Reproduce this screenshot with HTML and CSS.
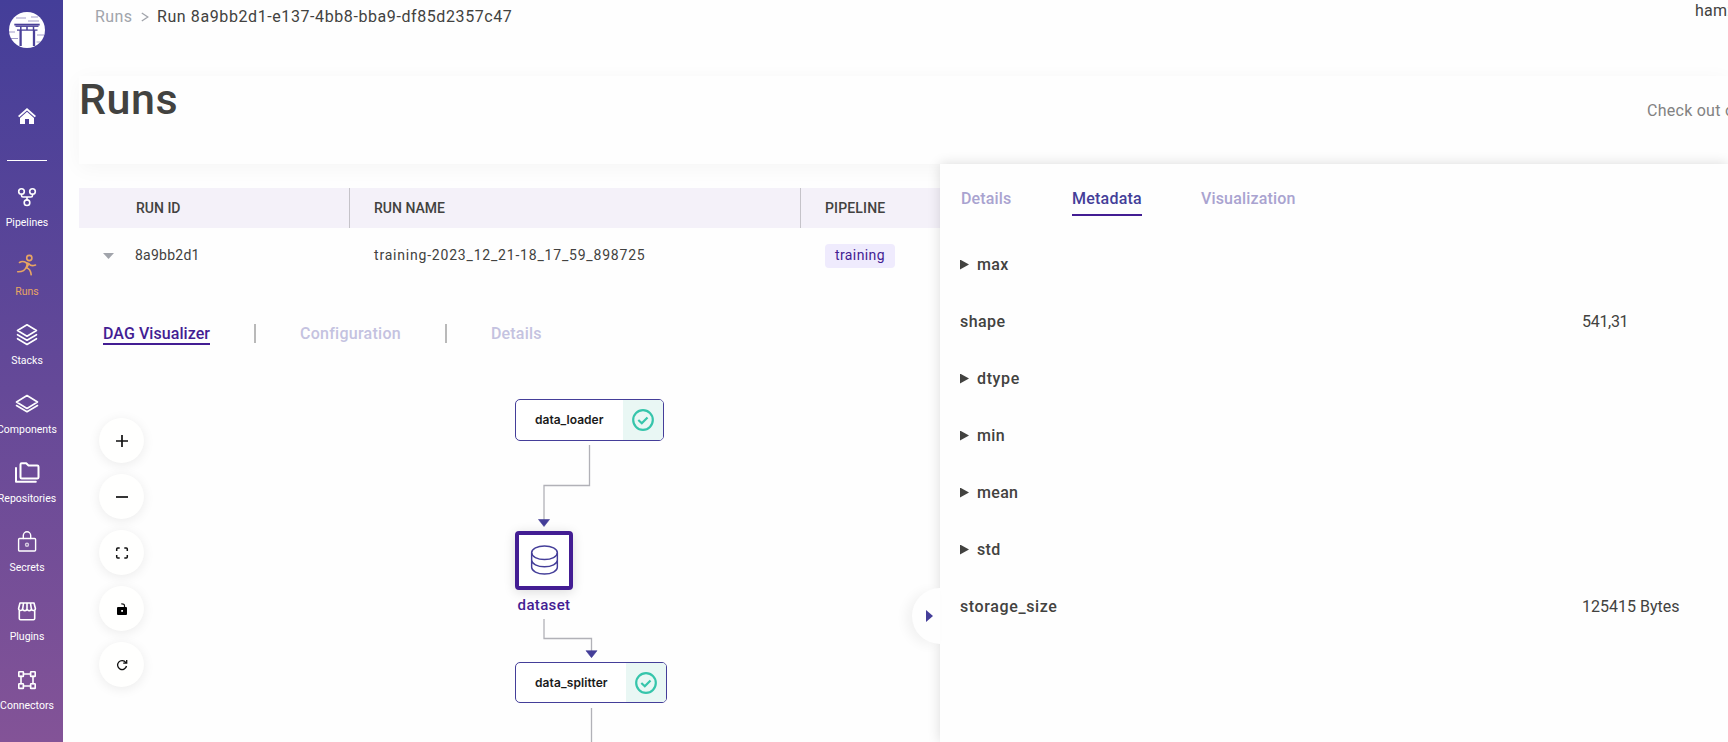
FILE: index.html
```html
<!DOCTYPE html>
<html lang="en">
<head>
<meta charset="utf-8">
<title>Runs</title>
<link rel="stylesheet" href="styles.css">
</head>
<body>
<div class="app">
  <nav class="sidebar">
    <svg class="logo" viewBox="0 0 36 36">
      <circle cx="18" cy="18" r="18" fill="#fff"/>
      <g stroke="#4a4099" fill="none">
        <path d="M5.300 12.600h25.400" stroke-width="1.800"/>
        <path d="M6.500 14.200h23" stroke-width="1.400"/>
        <path d="M8 18.100h20.500" stroke-width="1.300"/>
        <path d="M11.800 14.500v3.500M18 14.500v3.500M24.500 14.500v3.500" stroke-width="1.500"/>
        <path d="M11.600 18v16M25 18v16" stroke-width="2.300"/>
        <path d="M7 6h10M22 5h7M19 9h11M0 20h6M2 26.500h7M28 23h7M27.500 30h4" stroke-width=".8" opacity=".65"/>
      </g>
    </svg>
    <svg class="home" viewBox="0 0 18 16" fill="#fff"><path d="M9 0 0 8l1.300 1.300L9 2.500l7.700 6.800L18 8z"/><path d="M9 3.800 2 10v6h5v-5h4v5h5v-6z"/></svg>
    <div class="rule"></div>
    <a class="nav-item">
      <svg viewBox="0 0 26 26"><circle cx="7.500" cy="7.500" r="2.800"/><circle cx="18.500" cy="7.500" r="2.800"/><circle cx="13" cy="18.700" r="2.800"/><path d="M7.500 10.300v1.200q0 1.500 1.500 1.500h8q1.500 0 1.500-1.500v-1.200M13 13v3"/></svg>
      <span>Pipelines</span></a>
    <a class="nav-item active">
      <svg viewBox="0 0 26 26"><circle cx="15.300" cy="5" r="2.600"/><path d="M5.500 9.500q3-2 6.500 0l3 1.300q2 3 6.500 1.200M12 9.700q2 1.500.5 4-2 5.300-8.800 5M14.800 10.800l-2.300 4q4 1 4.700 7"/></svg>
      <span>Runs</span></a>
    <a class="nav-item">
      <svg viewBox="0 0 26 26"><path d="M13 2.800 3.500 8.500 13 14.200l9.500-5.700zM3.500 12.700 13 18.300l9.500-5.600M3.500 16.700 13 22.500l9.500-5.800"/></svg>
      <span>Stacks</span></a>
    <a class="nav-item">
      <svg viewBox="0 0 26 26"><path d="M13 4.500 2.500 11 13 17.500 23.500 11zM2.500 14.500 13 20.800l10.500-6.300"/></svg>
      <span>Components</span></a>
    <a class="nav-item bold">
      <svg viewBox="0 0 26 26"><path d="M6.500 4.500q0-1.200 1.200-1.200h4.500l2.300 2.200h8.800q1.200 0 1.200 1.200v10.500q0 1.200-1.200 1.200H7.700q-1.200 0-1.200-1.200zM2 8v13.700h19.800"/></svg>
      <span>Repositories</span></a>
    <a class="nav-item thin">
      <svg viewBox="0 0 26 26"><rect x="4.600" y="9.500" width="17" height="12.500" rx="1"/><path d="M9.300 9.500V6.500a3.700 3.700 0 0 1 7.400 0v3"/><circle cx="13" cy="15.800" r="1.500" opacity=".7"/></svg>
      <span>Secrets</span></a>
    <a class="nav-item">
      <svg viewBox="0 0 26 26"><path d="M5.300 12v8.500q0 1.200 1.200 1.200h13q1.200 0 1.200-1.200V12M6 5h14l1.400 5.500a2 2 0 0 1-4 0 2.200 2.200 0 0 1-4.400 0 2.200 2.200 0 0 1-4.400 0 2 2 0 0 1-4 0zM9.500 5l-.7 5M13 5v5M16.500 5l.7 5"/></svg>
      <span>Plugins</span></a>
    <a class="nav-item">
      <svg viewBox="0 0 26 26"><rect x="4.800" y="4.800" width="4.600" height="4.600" rx=".5"/><rect x="16.600" y="4.800" width="4.600" height="4.600" rx=".5"/><rect x="4.800" y="16.800" width="4.600" height="4.600" rx=".5"/><rect x="16.600" y="16.800" width="4.600" height="4.600" rx=".5"/><path d="M9.400 7h7.200M9.400 19h7.200M7 9.400v7.400M19 9.400v7.400"/></svg>
      <span>Connectors</span></a>
  </nav>

  <main class="main">
    <header class="topbar">
      <div class="crumbs"><span class="crumb-root">Runs</span><svg class="crumb-sep" viewBox="0 0 8 10"><path d="m.8 1 6 4-6 4"/></svg><span class="crumb-run">Run 8a9bb2d1-e137-4bb8-bba9-df85d2357c47</span></div>
      <span class="user">hamz</span>
    </header>
    <section class="page-head">
      <h1>Runs</h1>
      <span class="hint">Check out o</span>
    </section>
    <section class="runs">
      <div class="row head"><div>RUN ID</div><div>RUN NAME</div><div class="th-pipe">PIPELINE</div></div>
      <div class="row"><div class="id-cell"><i class="caret"></i><span class="run-id">8a9bb2d1</span></div><div class="run-name">training-2023_12_21-18_17_59_898725</div><div><span class="badge">training</span></div></div>
      <div class="tabs"><span class="tab on">DAG Visualizer</span><i></i><span class="tab t-conf">Configuration</span><i></i><span class="tab t-det">Details</span></div>
      <div class="dag">
        <div class="controls">
          <button><svg viewBox="0 0 14 14"><path d="M1 7h12M7 1v12" stroke-width="1.700"/></svg></button>
          <button><svg viewBox="0 0 14 14"><path d="M1 7h12" stroke-width="1.700"/></svg></button>
          <button><svg viewBox="0 0 14 14"><path d="M1.700 5V3q0-1 1-1h2M9.300 2h2q1 0 1 1v2M12.300 9v2q0 1-1 1h-2M4.700 12h-2q-1 0-1-1V9" stroke-width="1.500"/></svg></button>
          <button><svg viewBox="0 0 14 14"><rect x="2" y="5" width="10" height="8" rx="1" fill="#000" stroke="none"/><rect x="6.200" y="8" width="1.800" height="1.800" fill="#fff" stroke="none"/><path d="M9.500 5V3.800Q9.500 1.600 6.300 1.800" stroke-width="1.200"/></svg></button>
          <button><svg viewBox="0 0 14 14"><path d="M10.800 4.500A4.500 4.500 0 1 0 11.500 8M11.700 2v3.200H8.200" stroke-width="1.300"/></svg></button>
        </div>
        <svg class="edges" viewBox="0 0 861 378" width="861" height="378">
          <path d="M510.500 81v40.500H465V156M465 255v19.500h47.500V287M512.500 344v34" fill="none" stroke="#b1b1b7" stroke-width="1.300"/>
          <path d="M459.500 155.500h11l-5.500 7zM507 286.700h11l-5.500 7z" fill="#443e99" stroke="#443e99" stroke-width=".6"/>
        </svg>
        <div class="step loader"><span>data_loader</span><div class="ok"><svg viewBox="0 0 24 24"><circle cx="12" cy="12" r="9.800"/><path d="m7.300 12 3.500 3.300 5.700-5.800"/></svg></div></div>
        <div class="artifact"><svg viewBox="0 0 30 32"><ellipse cx="15" cy="8" rx="13.300" ry="7"/><path d="M1.700 8v15c0 3.800 6 7 13.300 7s13.300-3.200 13.300-7V8M1.700 15.500c0 3.800 6 7 13.300 7s13.300-3.200 13.300-7"/></svg></div>
        <div class="artifact-label">dataset</div>
        <div class="step splitter"><span>data_splitter</span><div class="ok"><svg viewBox="0 0 24 24"><circle cx="12" cy="12" r="9.800"/><path d="m7.300 12 3.500 3.300 5.700-5.800"/></svg></div></div>
      </div>
    </section>
  </main>

  <aside class="panel">
    <div class="toggle"><svg viewBox="0 0 7 12"><path d="M0 0v12l7-6z" fill="#443e99"/></svg></div>
    <div class="ptabs"><span class="pt1">Details</span><span class="pt2 cur">Metadata</span><span>Visualization</span></div>
    <div class="meta"><i class="tri"></i><b>max</b></div>
    <div class="meta"><b class="shape">shape</b><span class="v dims">541,31</span></div>
    <div class="meta"><i class="tri"></i><b class="wide">dtype</b></div>
    <div class="meta"><i class="tri"></i><b>min</b></div>
    <div class="meta"><i class="tri"></i><b>mean</b></div>
    <div class="meta"><i class="tri"></i><b>std</b></div>
    <div class="meta"><b class="wide">storage_size</b><span class="v">125415 Bytes</span></div>
  </aside>
</div>
</body>
</html>
```
FILE: styles.css
```css
* { box-sizing: border-box; }
body { margin: 0; background: #fefefe; font-family: Roboto, "Liberation Sans", sans-serif; color: #424240; overflow: hidden; }
.app { position: relative; display: flex; width: 1728px; height: 742px; overflow: hidden; white-space: nowrap; }

.sidebar { width: 63px; flex: none; height: 742px; padding: 12px 9px 0 0; background: linear-gradient(#443e99, #835397); display: flex; flex-direction: column; align-items: center; }
.logo { width: 36px; height: 36px; flex: none; }
.home { width: 18px; height: 16px; flex: none; margin-top: 60px; }
.rule { width: 40px; height: 1px; flex: none; background: #fff; margin: 36px 0 23px; }
.nav-item { height: 69px; flex: none; display: flex; flex-direction: column; align-items: center; gap: 5px; color: #fff; font-size: 10.5px; line-height: 16px; }
.nav-item svg { width: 26px; height: 26px; fill: none; stroke: currentColor; stroke-width: 1.6; stroke-linejoin: round; stroke-linecap: round; }
.nav-item.thin svg { stroke-width: 1.4; }
.nav-item.bold svg { stroke-width: 2; }
.nav-item.active { color: #e8a562; }

.main { flex: 1; min-width: 0; }
.topbar { height: 76px; padding-left: 32px; display: flex; justify-content: space-between; align-items: flex-start; font-size: 16px; }
.crumbs { display: flex; line-height: 20px; padding-top: 7px; }
.crumb-root { width: 46px; color: #a1a4ab; letter-spacing: .4px; }
.crumb-sep { width: 8px; height: 10px; margin: 5px 8px 0 0; fill: none; stroke: #a1a4ab; stroke-width: 1.3; }
.crumb-run { letter-spacing: .59px; }
.user { width: 33px; overflow: hidden; line-height: 20px; padding-top: 1px; letter-spacing: .3px; }
.page-head { margin-left: 16px; height: 88px; display: flex; justify-content: space-between; background: #fefefe; box-shadow: 0 4px 20px rgba(0,0,0,.04); }
h1 { margin: 0; font-size: 43px; font-weight: 500; line-height: 46px; letter-spacing: .5px; }
.hint { width: 81px; overflow: hidden; font-size: 16px; line-height: 20px; margin-top: 25px; color: #828282; letter-spacing: .26px; }

.runs { margin: 24px 0 0 16px; }
.row { display: grid; grid-template-columns: 270px 451px 1fr; height: 54px; align-items: center; font-size: 14px; }
.row > div { padding-left: 25px; }
.row > div:first-child { padding-left: 57px; }
.row.head { height: 40px; background: #f4f1f9; font-weight: 500; align-items: stretch; line-height: 40px; }
.row.head > div + div { padding-left: 24px; border-left: 1px solid #c5c3c9; }
.th-pipe { letter-spacing: .15px; }
.row > .id-cell { display: flex; align-items: center; }
.row > .id-cell:first-child { padding-left: 24px; }
.caret { width: 11px; height: 6px; margin: 2px 21px 0 0; background: #a1a4ab; clip-path: polygon(0 0, 100% 0, 50% 100%); }
.run-id { letter-spacing: .24px; }
.row > .run-name { letter-spacing: .8px; }
.badge { display: inline-flex; justify-content: center; width: 70px; height: 24px; margin-top: 2px; line-height: 22px; border-radius: 4px; background: #efebfd; color: #431d93; letter-spacing: .4px; }
.tabs { display: flex; height: 82px; padding: 42px 0 0 24px; font-size: 16px; font-weight: 500; line-height: 20px; }
.tabs i { width: 2px; height: 19px; background: #b9b9b9; margin: 0 44px 0 44px; }
.tab { width: 107px; height: 21px; color: #c4c2e0; letter-spacing: .07px; }
.tab.on { color: #431d93; border-bottom: 2px solid #431d93; }
.t-conf { width: 101px; letter-spacing: .26px; }
.t-det { letter-spacing: .17px; }

.dag { position: relative; height: 378px; }
.edges { position: absolute; left: 0; top: 0; }
.controls { position: absolute; left: 20px; top: 54px; display: grid; gap: 11px; }
.controls button { width: 45px; height: 45px; border: 0; border-radius: 50%; background: #fffffe; box-shadow: 0 2px 12px rgba(0,0,0,.08); display: grid; place-items: center; padding: 0; }
.controls svg { width: 14px; height: 14px; fill: none; stroke: #111; }
.step { position: absolute; left: 436px; border: 1.5px solid #443e99; border-radius: 5px; background: #fff; display: flex; justify-content: space-between; align-items: center; overflow: hidden; padding-left: 19px; font: 600 12px/16px Inter, sans-serif; color: #1a1a1a; }
.loader { top: 35px; width: 149px; height: 42px; }
.splitter { top: 298px; width: 152px; height: 41px; letter-spacing: .1px; }
.ok { width: 40px; height: 100%; background: #e9f7f4; display: grid; place-items: center; }
.ok svg { width: 24px; height: 24px; fill: none; stroke: #36c5ab; stroke-width: 2.2; }
.artifact { position: absolute; left: 436px; top: 167px; width: 58px; height: 59px; border: 4px solid #431d93; border-radius: 4px; background: #fff; box-shadow: 0 2px 12px rgba(0,0,0,.14); display: grid; place-items: center; }
.artifact svg { width: 29px; height: 31px; fill: none; stroke: #443e99; stroke-width: 1.5; }
.artifact-label { position: absolute; left: 436px; top: 231px; width: 58px; text-align: center; font-size: 15px; font-weight: 500; line-height: 20px; color: #431d93; letter-spacing: .35px; }

.panel { position: absolute; left: 940px; top: 164px; width: 788px; height: 578px; padding: 24px 0 0 20px; background: #fefefe; box-shadow: 0 0 12px rgba(0,0,0,.14); }
.ptabs { display: flex; height: 48px; font-size: 16px; font-weight: 500; line-height: 22px; color: #a9a3d0; padding-left: 1px; letter-spacing: .16px; }
.ptabs span { height: 28px; }
.pt1 { width: 51px; margin-right: 60px; }
.pt2 { width: 70px; margin-right: 59px; }
.ptabs .cur { color: #443e99; border-bottom: 2px solid #431d93; letter-spacing: .22px; }
.meta { height: 57px; display: flex; align-items: center; font-size: 16px; line-height: 20px; }
.meta b { font-weight: 500; letter-spacing: .32px; }
.meta .shape { letter-spacing: .42px; }
.meta .wide { letter-spacing: .62px; }
.tri { width: 9px; height: 10px; margin-right: 8px; background: #424240; clip-path: polygon(0 0, 100% 50%, 0 100%); }
.v { margin-left: auto; width: 146px; }
.dims { letter-spacing: -.3px; }
.toggle { position: absolute; left: -28px; top: 424px; width: 28px; height: 56px; border-radius: 28px 0 0 28px; background: #fefefe; box-shadow: -6px 2px 12px rgba(0,0,0,.05); padding: 22px 0 0 14px; }
.toggle svg { display: block; width: 7px; height: 12px; }
```
